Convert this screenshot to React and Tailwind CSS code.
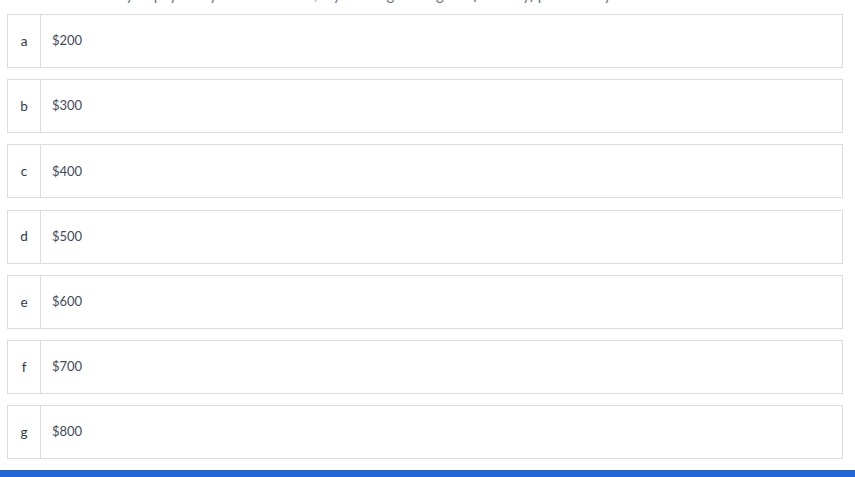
const options = [
  { key: 'a', value: '$200' },
  { key: 'b', value: '$300' },
  { key: 'c', value: '$400' },
  { key: 'd', value: '$500' },
  { key: 'e', value: '$600' },
  { key: 'f', value: '$700' },
  { key: 'g', value: '$800' },
]

export default function App() {
  return (
    <div className="w-[855px] h-[477px] bg-white flex flex-col overflow-hidden" style={{ fontFamily: "Lato, 'Open Sans', sans-serif" }}>
      <div className="h-[14px] shrink-0 overflow-hidden pl-[7px]">
        <p className="-mt-[15px] text-[15px] leading-[18px] text-[#6b7280] whitespace-nowrap">
          How much would you pay every month for this, if you bought a regular (monthly) plan each year?
        </p>
      </div>

      <div className="flex flex-col gap-[11.2px] pl-[7px]">
        {options.map((opt) => (
          <div key={opt.key} className="w-[836px] h-[54px] flex border border-[#dcdcde] bg-white">
            <div className="w-[33px] flex items-center justify-center border-r border-[#dcdcde] text-[13.5px] text-[#2d3a4b]">
              {opt.key}
            </div>
            <div className="flex items-center pl-[11px] text-[13px] text-[#3f4b5c]">
              {opt.value}
            </div>
          </div>
        ))}
      </div>

      <div className="mt-auto h-[7px] bg-[#1f66d9]" />
    </div>
  )
}
